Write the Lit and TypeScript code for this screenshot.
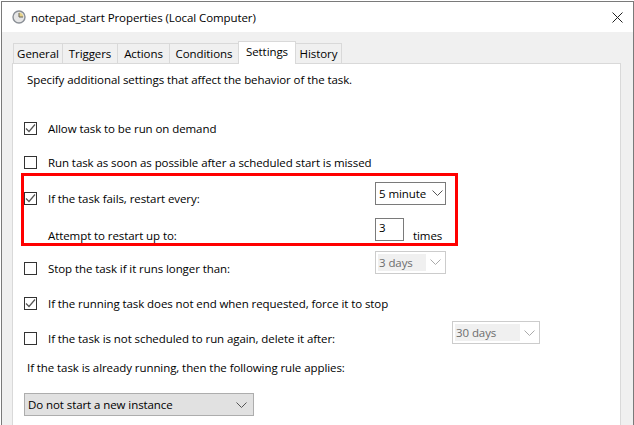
import { LitElement, css, html } from "lit";
import { customElement } from "lit/decorators.js";

const chevron = html`<svg class="chev" width="11" height="6" viewBox="0 0 11 6"><path d="M.5.5l5 5 5-5" fill="none" stroke="currentColor"/></svg>`;

const check = (on: boolean) => html`<span class="box">
  ${on ? html`<svg width="13" height="13" viewBox="0 0 13 13"><path d="M2 6.5l3 3 6-7" fill="none" stroke="#555" stroke-width="1.2"/></svg>` : ""}
</span>`;

@customElement("app-root")
export class AppRoot extends LitElement {
  static styles = css`
    :host {
      display: block;
      width: 634px;
      height: 425px;
      overflow: hidden;
      font-family: "Open Sans", "Noto Sans", sans-serif;
      font-size: 11.5px;
      letter-spacing: -0.08px;
      color: #000;
    }
    .window {
      box-sizing: border-box;
      height: 425px;
      margin: 1px 0 0 1px;
      border: 1px solid #7a7a7a;
      background: #f0f0f0;
      display: flex;
      flex-direction: column;
    }
    .title {
      height: 30px;
      flex: none;
      background: #fff;
      display: flex;
      align-items: center;
      padding: 0 10px 0 10px;
      gap: 5px;
    }
    .title .text {
      flex: 1;
    }
    .tabs {
      flex: none;
      height: 31px;
      box-sizing: border-box;
      padding: 10px 0 0 11px;
      display: flex;
      align-items: flex-end;
      position: relative;
      z-index: 1;
    }
    .tab {
      box-sizing: border-box;
      height: 20px;
      border: 1px solid #d9d9d9;
      border-bottom: 0;
      border-left-width: 0;
      background: #f0f0f0;
      display: flex;
      align-items: center;
      justify-content: center;
    }
    .tab:first-child {
      border-left-width: 1px;
    }
    .tab.active {
      height: 23px;
      background: #fff;
      margin-bottom: -1px;
      padding-bottom: 4px;
      border-left-width: 1px;
      margin-left: -1px;
    }
    .panel {
      flex: 1;
      box-sizing: border-box;
      margin: 0 12px 0 10px;
      background: #fff;
      border: 1px solid #d9d9d9;
      border-bottom: 0;
      display: flex;
      flex-direction: column;
      padding-left: 8px;
    }
    .row {
      display: flex;
      align-items: center;
      height: 20px;
      flex: none;
    }
    .note {
      padding-left: 6px;
    }
    .box {
      box-sizing: border-box;
      width: 13px;
      height: 13px;
      border: 1px solid #333;
      background: #fff;
      flex: none;
      margin: 0 11px 0 3px;
      display: flex;
      align-items: center;
      justify-content: center;
    }
    .box svg {
      margin: -1px;
      flex: none;
    }
    .label {
      white-space: nowrap;
      flex: none;
    }
    .alert {
      box-sizing: border-box;
      width: 437px;
      height: 73px;
      margin-top: 1px;
      padding-top: 13px;
      border: 3px solid #f00;
      flex: none;
      display: flex;
      flex-direction: column;
      gap: 19px;
    }
    .alert .box {
      margin-left: 0;
    }
    .alert .row {
      height: 18px;
    }
    .wide {
      width: 327px;
    }
    .indent {
      margin-left: 24px;
    }
    .sel {
      box-sizing: border-box;
      width: 71px;
      height: 23px;
      border: 1px solid #7a7a7a;
      background: #fff;
      display: flex;
      align-items: center;
      justify-content: space-between;
      padding: 0 2px 0 3px;
      flex: none;
      color: #000;
    }
    .sel.up {
      margin-top: -10px;
    }
    .chev {
      color: #555;
      flex: none;
    }
    .sel.off {
      border-color: #ccc;
      color: #6d6d6d;
      padding: 2px 4px 2px 2px;
    }
    .sel.off .chev {
      color: #aaa;
    }
    .val {
      width: 48px;
      background: #f0f0f0;
      align-self: stretch;
      display: flex;
      align-items: center;
      padding-left: 1px;
      box-sizing: border-box;
    }
    .later {
      margin-top: -12px;
    }
    .after {
      width: 88px;
      margin-top: -11px;
    }
    .after .val {
      width: 65px;
    }
    .sel.main {
      background: #e1e1e1;
      border-color: #adadad;
      width: 230px;
      margin: 16px 0 0 3px;
      padding-right: 6px;
    }
    .num {
      box-sizing: border-box;
      width: 29px;
      height: 23px;
      margin-top: -11px;
      border: 1px solid #7a7a7a;
      padding: 0 0 4px 3px;
      display: flex;
      align-items: center;
      flex: none;
    }
    .times {
      margin-left: 9px;
    }
  `;

  render() {
    return html`<div class="window">
      <div class="title">
        <svg width="14" height="14" viewBox="0 0 14 14">
          <circle cx="7" cy="7" r="6" fill="#e6e6e6" stroke="#8a8f96" stroke-width="1.4"/>
          <path d="M7 7V2.6A4.4 4.4 0 0 1 11.4 7Z" fill="#e8d48a"/>
          <path d="M7 3V7H11" fill="none" stroke="#66645a" stroke-width="1"/>
        </svg>
        <span class="text">notepad_start Properties (Local Computer)</span>
        <svg width="11" height="11" viewBox="0 0 11 11"><path d="M.5.5l10 10M10.5.5l-10 10" stroke="#222" fill="none"/></svg>
      </div>
      <div class="tabs">
        <div class="tab" style="width:50px">General</div>
        <div class="tab" style="width:55px">Triggers</div>
        <div class="tab" style="width:52px">Actions</div>
        <div class="tab" style="width:69px">Conditions</div>
        <div class="tab active" style="width:58px">Settings</div>
        <div class="tab" style="width:46px">History</div>
      </div>
      <div class="panel">
        <div class="row note" style="margin-top:5px">Specify additional settings that affect the behavior of the task.</div>
        <div class="row" style="margin-top:29px">${check(true)}<span class="label">Allow task to be run on demand</span></div>
        <div class="row" style="margin-top:14px">${check(false)}<span class="label">Run task as soon as possible after a scheduled start is missed</span></div>
        <div class="alert">
          <div class="row">
            ${check(true)}<span class="label wide">If the task fails, restart every:</span>
            <div class="sel up"><span>5 minute</span>${chevron}</div>
          </div>
          <div class="row">
            <span class="label wide indent">Attempt to restart up to:</span>
            <div class="num">3</div><span class="times">times</span>
          </div>
        </div>
        <div class="row" style="margin-top:12px">${check(false)}<span class="label wide">Stop the task if it runs longer than:</span>
          <div class="sel off later"><span class="val">3 days</span>${chevron}</div>
        </div>
        <div class="row" style="margin-top:15px">${check(true)}<span class="label">If the running task does not end when requested, force it to stop</span></div>
        <div class="row" style="margin-top:15px">${check(false)}<span class="label" style="width:404px">If the task is not scheduled to run again, delete it after:</span>
          <div class="sel off after"><span class="val">30 days</span>${chevron}</div>
        </div>
        <div class="row note" style="margin-top:9px">If the task is already running, then the following rule applies:</div>
        <div class="sel main"><span>Do not start a new instance</span>${chevron}</div>
      </div>
    </div>`;
  }
}
